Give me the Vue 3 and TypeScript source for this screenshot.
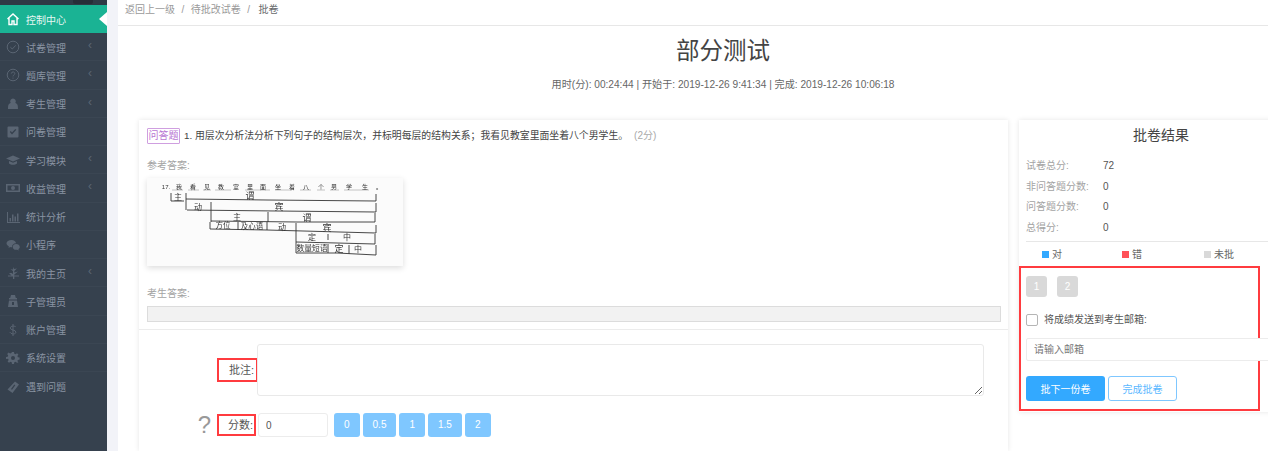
<script setup lang="ts">
interface MenuItem {
  label: string
  icon: string
  fill?: boolean
  arrow?: boolean
}

const menu: MenuItem[] = [
  { label: '控制中心', icon: 'M1.5 7 7 2l5.5 5M3 6v6.5h3V9h2v3.500h3V6' },
  { label: '试卷管理', arrow: true, icon: 'M7 1.2a5.8 5.8 0 1 0 0 11.6A5.8 5.8 0 0 0 7 1.2zM4.4 7.2 6.3 9l3.4-3.6' },
  { label: '题库管理', arrow: true, icon: 'M7 1.2a5.8 5.8 0 1 0 0 11.6A5.8 5.8 0 0 0 7 1.2zM5.3 5.6C5.3 3.4 8.8 3.5 8.8 5.5 8.8 6.9 7 6.900 7 8.400M7 9.600v1' },
  { label: '考生管理', arrow: true, fill: true, icon: 'M7 1.500a2.800 2.800 0 0 1 2.300 4.400C11.500 6.500 12 8 12 12H2c0-4 .5-5.500 2.700-6.100A2.800 2.800 0 0 1 7 1.500z' },
  { label: '问卷管理', fill: true, icon: 'M2.500 1.500h9a1 1 0 0 1 1 1v9a1 1 0 0 1-1 1h-9a1 1 0 0 1-1-1v-9a1 1 0 0 1 1-1zM3.800 7 6 9.400l4.300-4.600-1-.9L6 7.500 4.800 6z' },
  { label: '学习模块', arrow: true, fill: true, icon: 'M7 2.500 14 5.500 7 8.500 0 5.500zM3 8l4 1.800L11 8v2.500c-2 1.700-6 1.700-8 0z' },
  { label: '收益管理', arrow: true, fill: true, icon: 'M0 3h14v8H0zM1.500 4.500v5h11v-5zM7 5a2 2 0 1 1 0 4 2 2 0 0 1 0-4z' },
  { label: '统计分析', fill: true, icon: 'M1 2h1v10h12v1H1zM3.500 8h1.500v3.500H3.500zM6 4.500h1.500v7H6zM8.500 6.500H10v5H8.500zM11 3.500h1.500v8H11z' },
  { label: '小程序', fill: true, icon: 'M5.500 2C8 2 10 3.500 10 5.300 7.500 5.300 5.800 7 6.200 9.200 5.500 9.300 4.800 9.200 4.200 9L2.500 10l.4-1.500C1.600 7.700.5 6.500.5 5.300.5 3.500 2.800 2 5.500 2zM10 6c2 0 3.800 1.300 3.800 2.900 0 .9-.6 1.700-1.400 2.300l.3 1.300-1.500-.8C8.500 12.300 6.800 10.800 6.800 8.900 6.800 7.300 8.200 6 10 6z' },
  { label: '我的主页', arrow: true, fill: true, icon: 'M7.500 1 8.200 3 11 2.500 8.300 5v1.500l3.700-1-3.700 3v1H13v1H8.300V13H7V10.500H2v-1h3.500L3 7h2.500L7 8V5L4.500 3.200 7 3.500z' },
  { label: '子管理员', fill: true, icon: 'M5 1h4l.8 3H11v1.500H3V4h1.200zM3 6.500h8l1 6.500H2zM6 8v3h2V8z' },
  { label: '账户管理', icon: 'M9.800 4C9.300 2.800 4.300 2.500 4.300 5c0 2.800 5.600 1.300 5.600 4.200 0 2.500-5.200 2.200-6-.2M7 1v12' },
  { label: '系统设置', fill: true, icon: 'M6 1h2l.3 1.700 1.200.5L11 2.200l1.400 1.400-1 1.500.5 1.200 1.700.3v2l-1.700.3-.5 1.200 1 1.500L11 11.800l-1.500-1-1.200.5L8 13H6l-.3-1.700-1.200-.5-1.500 1-1.400-1.400 1-1.500-.5-1.200L0 8V6l1.700-.3.5-1.200-1-1.500L2.600 1.600l1.500 1 1.200-.5zM7 5a2 2 0 1 0 0 4 2 2 0 0 0 0-4z' },
  { label: '遇到问题', fill: true, icon: 'M9 1.500 13 4.500 6.500 13 1.500 9.500zM8.300 4.500 5 9l1 .7 3.300-4.500z' },
]

const stats = [
  { label: '试卷总分:', value: '72' },
  { label: '非问答题分数:', value: '0' },
  { label: '问答题分数:', value: '0' },
  { label: '总得分:', value: '0' },
]

const legend = [
  { label: '对', color: '#33a9ff' },
  { label: '错', color: '#ff5158' },
  { label: '未批', color: '#d9d9d9' },
]

const quickScores = ['0', '0.5', '1', '1.5', '2']

// hand written answer sheet, coordinates inside the 256x88 picture
const sheetLines = [
  'M24 15 24 23 37 23', 'M39 15 39 32', 'M39 21 120 22 229 23', 'M229 16 229 23',
  'M40 32 130 33 229 34', 'M64 24 64 44', 'M229 25 229 34',
  'M64 43 150 44 228 44', 'M121 34 121 44', 'M228 35 228 44',
  'M63 44 63 51 120 52 229 55', 'M91 44 91 52', 'M120 44 120 52', 'M149 45 149 75', 'M229 47 229 55',
  'M149 64 190 65 228 66', 'M181 56 181 62', 'M228 56 228 66',
  'M149 75 190 75 229 77', 'M181 66 181 75', 'M202 67 202 76', 'M229 67 229 77',
]

const sheetWords = [
  { t: '17.', x: 19, y: 11, s: 6 }, { t: '我', x: 32, y: 11, s: 6 }, { t: '看', x: 46, y: 11, s: 6 },
  { t: '见', x: 60, y: 11, s: 6 }, { t: '教', x: 74, y: 11, s: 6 }, { t: '室', x: 89, y: 11, s: 6 },
  { t: '里', x: 103, y: 11, s: 6 }, { t: '面', x: 116, y: 11, s: 6 }, { t: '坐', x: 131, y: 11, s: 6 },
  { t: '着', x: 145, y: 11, s: 6 }, { t: '八', x: 159, y: 11, s: 6 }, { t: '个', x: 174, y: 11, s: 6 },
  { t: '男', x: 187, y: 11, s: 6 }, { t: '学', x: 202, y: 11, s: 6 }, { t: '生', x: 218, y: 11, s: 6 },
  { t: '。', x: 232, y: 11, s: 6 },
  { t: '主', x: 31, y: 22, s: 8 }, { t: '谓', x: 103, y: 21, s: 9 }, { t: '动', x: 51, y: 32, s: 8 },
  { t: '宾', x: 132, y: 32, s: 9 }, { t: '主', x: 90, y: 42, s: 8 }, { t: '谓', x: 160, y: 43, s: 9 },
  { t: '方位', x: 76, y: 50, s: 7.500 }, { t: '及心语', x: 105, y: 51, s: 7.500 }, { t: '动', x: 135, y: 52, s: 8 },
  { t: '宾', x: 180, y: 53, s: 9 }, { t: '定', x: 165, y: 62, s: 8 }, { t: '中', x: 200, y: 62, s: 8 },
  { t: '数量短语', x: 165, y: 73, s: 7.800 }, { t: '定', x: 192, y: 74, s: 9 }, { t: '中', x: 211, y: 74, s: 8 },
]

const sheetRules = [
  [25, 36], [41, 52], [56, 64], [68, 84], [98, 123], [128, 145], [153, 164], [170, 178], [183, 192], [197, 222],
]
</script>

<template>
  <div class="app">
    <aside class="sidebar">
      <div class="side-top"><span class="side-chip"></span></div>
      <div v-for="(item, i) in menu" :key="item.label" class="menu-item" :class="{ active: i === 0 }">
        <svg class="menu-icon" viewBox="0 0 14 14" :class="{ solid: item.fill }">
          <path :d="item.icon" fill-rule="evenodd" />
        </svg>
        <span class="menu-label">{{ item.label }}</span>
        <span v-if="item.arrow" class="menu-arrow">‹</span>
      </div>
    </aside>

    <main class="main">
      <nav class="breadcrumb">
        <span>返回上一级</span><i>/</i><span>待批改试卷</span><i>/</i><span class="current">批卷</span>
      </nav>

      <header class="head">
        <h1>部分测试</h1>
        <p>用时(分): 00:24:44 | 开始于: 2019-12-26 9:41:34 | 完成: 2019-12-26 10:06:18</p>
      </header>

      <div class="columns">
        <section class="paper">
          <div class="question">
            <div class="q-title">
              <span class="q-tag">问答题</span>
              <span class="q-text">1. 用层次分析法分析下列句子的结构层次，并标明每层的结构关系；我看见教室里面坐着八个男学生。</span>
              <span class="q-score">(2分)</span>
            </div>
            <div class="q-label first">参考答案:</div>
            <svg class="sheet" viewBox="0 0 256 88">
              <g class="sheet-ink">
                <line v-for="r in sheetRules" :key="r[0]" :x1="r[0]" :x2="r[1]" y1="12" y2="12" class="rule" />
                <path v-for="d in sheetLines" :key="d" :d="d" class="ink" />
                <text v-for="w in sheetWords" :key="w.t + w.x" :x="w.x" :y="w.y" :font-size="w.s" text-anchor="middle" class="hand">{{ w.t }}</text>
              </g>
            </svg>
            <div class="q-label second">考生答案:</div>
            <div class="answer-bar"></div>
          </div>

          <div class="grading">
            <div class="comment-row">
              <label class="field-label comment-label">批注:</label>
              <textarea class="comment"></textarea>
            </div>
            <div class="score-row">
              <span class="help">?</span>
              <label class="field-label score-label">分数:</label>
              <input class="score-input" value="0" />
              <div class="quick">
                <span v-for="s in quickScores" :key="s" class="quick-btn">{{ s }}</span>
              </div>
            </div>
          </div>
        </section>

        <section class="result">
          <h3>批卷结果</h3>
          <dl class="stats">
            <div v-for="s in stats" :key="s.label" class="stat">
              <dt>{{ s.label }}</dt>
              <dd>{{ s.value }}</dd>
            </div>
          </dl>
          <div class="legend">
            <span v-for="l in legend" :key="l.label" class="legend-item">
              <i :style="{ background: l.color }"></i>{{ l.label }}
            </span>
          </div>
          <div class="marked">
            <div class="nums">
              <span class="num">1</span>
              <span class="num">2</span>
            </div>
            <label class="send">
              <span class="check"></span>
              将成绩发送到考生邮箱:
            </label>
            <input class="email" placeholder="请输入邮箱" />
            <div class="actions">
              <button class="btn primary">批下一份卷</button>
              <button class="btn ghost">完成批卷</button>
            </div>
          </div>
        </section>
      </div>
    </main>
  </div>
</template>

<style scoped>
.app {
  display: flex;
  width: 1268px;
  height: 451px;
  overflow: hidden;
  background: #f2f3f8;
  font-family: "Liberation Sans", "Noto Sans CJK SC", sans-serif;
  font-size: 10px;
  color: #676a6c;
}

.sidebar {
  flex: none;
  width: 107px;
  background: #36414e;
}

.side-top {
  height: 5px;
  padding-left: 73px;
  background: #2f3a46;
}

.side-chip {
  display: block;
  width: 20px;
  height: 4px;
  background: #272d38;
  border-radius: 0 0 2px 2px;
}

.menu-item {
  position: relative;
  display: flex;
  align-items: center;
  height: 28.25px;
  box-sizing: border-box;
  padding: 1px 0 0 6px;
  border-bottom: 1px solid #3b4653;
  color: #8a94a3;
}

.menu-item:last-child {
  border-bottom: 0;
}

.menu-item.active {
  height: 28px;
  padding-top: 0;
  background: #1ab394;
  border-bottom: 0;
  color: #e6f7f3;
}

.menu-item.active::after {
  content: "";
  position: absolute;
  right: 0;
  top: 7px;
  border: 7px solid transparent;
  border-left: 0;
  border-right: 8px solid #fff;
}

.menu-icon {
  flex: none;
  width: 14px;
  height: 14px;
  margin-right: 6px;
  fill: none;
  stroke: #5a6573;
  stroke-width: 1;
}

.menu-icon.solid {
  fill: #5a6573;
  stroke: none;
}

.active .menu-icon {
  stroke: #fff;
  stroke-width: 1.4;
}

.menu-arrow {
  margin-left: 22px;
  margin-top: -4px;
  font-size: 12px;
  line-height: 1;
  color: #5a6573;
}

.main {
  flex: none;
  width: 1210px;
  margin-left: 11px;
  background: #fff;
}

.breadcrumb {
  display: flex;
  align-items: flex-start;
  height: 26px;
  box-sizing: border-box;
  padding: 3px 0 0 7px;
  line-height: 14px;
  border-bottom: 1px solid #e7e7e7;
  color: #9a9a9a;
}

.breadcrumb i {
  margin: 0 6.5px;
  font-style: normal;
}

.breadcrumb i:last-of-type {
  margin-right: 8.5px;
}

.breadcrumb .current {
  color: #676a6c;
}

.head {
  text-align: center;
}

.head h1 {
  margin: 11px 0 0;
  font-size: 23.5px;
  line-height: 28px;
  font-weight: 400;
  color: #444;
}

.head p {
  margin: 13px 0 0;
  line-height: 14px;
  font-size: 10.15px;
  color: #666;
}

.columns {
  display: grid;
  grid-template-columns: 869px 289px;
  column-gap: 11px;
  align-items: start;
  margin: 28px 0 0 21px;
}

.paper {
  box-shadow: 0 0 5px rgba(0, 0, 0, 0.1);
}

.question {
  height: 210px;
  box-sizing: border-box;
  padding: 8px 7px 0 8px;
  border-bottom: 1px solid #ececec;
}

.q-title {
  display: flex;
  align-items: center;
  gap: 4px;
  line-height: 16px;
  color: #444;
}

.q-tag {
  width: 33px;
  height: 16px;
  box-sizing: border-box;
  border: 1px solid #cf9fe0;
  border-radius: 1px;
  line-height: 14px;
  text-align: center;
  color: #b877d3;
}

.q-text {
  font-size: 9.85px;
}

.q-score {
  margin-left: 2px;
  color: #a9a9a9;
}

.q-label {
  line-height: 14px;
  color: #a3a3a3;
}

.q-label.first {
  margin-top: 15px;
}

.q-label.second {
  margin-top: 21px;
}

.sheet {
  display: block;
  width: 256px;
  height: 88px;
  margin-top: 5px;
  background: #fbfbfb;
  box-shadow: 0 2px 6px rgba(0, 0, 0, 0.14);
}

.sheet-ink {
  filter: blur(0.3px);
}

.ink {
  fill: none;
  stroke: #333;
  stroke-width: 0.9;
}

.rule {
  stroke: #8a8a8a;
  stroke-width: 0.5;
}

.hand {
  fill: #333;
}

.answer-bar {
  height: 16px;
  box-sizing: border-box;
  margin-top: 5px;
  background: #f2f2f2;
  border: 1px solid #dcdcdc;
}

.grading {
  padding: 14px 0 14px;
}

.comment-row {
  display: flex;
  align-items: center;
}

.field-label {
  box-sizing: border-box;
  border: 2px solid #ff3b3f;
  text-align: right;
  color: #555;
  font-size: 11px;
  white-space: nowrap;
}

.comment-label {
  flex: none;
  width: 41px;
  height: 24px;
  margin-left: 78px;
  line-height: 20px;
  padding-right: 2px;
}

.comment {
  display: block;
  width: 727px;
  height: 52px;
  box-sizing: border-box;
  padding: 4px;
  border: 1px solid #e9e9e9;
  border-radius: 3px;
  background: #fff;
  outline: 0;
  margin: 0 0 0 -1px;
}

.score-row {
  display: flex;
  align-items: center;
  margin-top: 17px;
  height: 24px;
}

.help {
  width: 78px;
  box-sizing: border-box;
  padding-right: 6px;
  text-align: right;
  font-size: 24px;
  line-height: 24px;
  color: #999;
}

.score-label {
  width: 39px;
  height: 22px;
  margin-right: 2px;
  line-height: 18px;
  padding-right: 1px;
}

.score-input {
  width: 70px;
  height: 24px;
  box-sizing: border-box;
  padding: 0 7px;
  border: 1px solid #ececec;
  border-radius: 3px;
  outline: 0;
  font: inherit;
  color: #555;
}

.quick {
  display: flex;
  gap: 3px;
  margin-left: 6px;
}

.quick-btn {
  min-width: 25px;
  height: 24px;
  box-sizing: border-box;
  padding: 0 10px;
  border-radius: 3px;
  background: #7fc7ff;
  color: #fff;
  line-height: 24px;
  text-align: center;
}

.result {
  height: 292px;
  box-shadow: 0 0 5px rgba(0, 0, 0, 0.1);
}

.result h3 {
  margin: 6px 0 0;
  width: 284px;
  font-size: 14px;
  line-height: 18px;
  font-weight: 400;
  text-align: center;
  color: #444;
}

.stats {
  margin: 12px 0 0;
  padding: 0 7px;
}

.stat {
  display: flex;
  height: 20.5px;
  line-height: 20.5px;
}

.stat dt {
  width: 77px;
  color: #a3a3a3;
}

.stat dd {
  margin: 0;
  color: #555;
}

.legend {
  display: flex;
  height: 23px;
  margin: 3px 7px 0;
  padding: 1px 0 0 16px;
  border-top: 1px solid #e7e7e7;
  line-height: 23px;
}

.legend-item {
  display: flex;
  align-items: center;
  width: 80px;
  color: #666;
}

.legend-item:nth-child(2) {
  width: 82px;
}

.legend-item i {
  width: 7px;
  height: 7px;
  margin-right: 3px;
}

.marked {
  width: 241px;
  height: 145px;
  box-sizing: border-box;
  padding: 8px 5px;
  border: 2px solid #ff3b3f;
}

.nums {
  display: flex;
  gap: 10px;
}

.num {
  width: 21px;
  height: 21px;
  border-radius: 3px;
  background: #d9d9d9;
  color: #fff;
  line-height: 21px;
  text-align: center;
}

.send {
  display: flex;
  align-items: center;
  gap: 6px;
  margin-top: 17px;
  line-height: 12px;
  color: #555;
}

.check {
  width: 12px;
  height: 12px;
  box-sizing: border-box;
  border: 1px solid #b5b5b5;
  border-radius: 2px;
}

.email {
  display: block;
  width: 265px;
  height: 23px;
  box-sizing: border-box;
  margin-top: 12px;
  padding: 0 7px;
  border: 1px solid #ececec;
  border-radius: 2px;
  outline: 0;
  font: inherit;
}

.email::placeholder {
  color: #777;
}

.actions {
  display: flex;
  gap: 3px;
  margin-top: 15px;
}

.btn {
  height: 25px;
  box-sizing: border-box;
  padding: 0;
  border-radius: 3px;
  font: inherit;
}

.primary {
  width: 79px;
  border: 0;
  background: #33a9ff;
  color: #fff;
}

.ghost {
  width: 69px;
  border: 1px solid #7fc7ff;
  background: #fff;
  color: #5ab8ff;
}
</style>
